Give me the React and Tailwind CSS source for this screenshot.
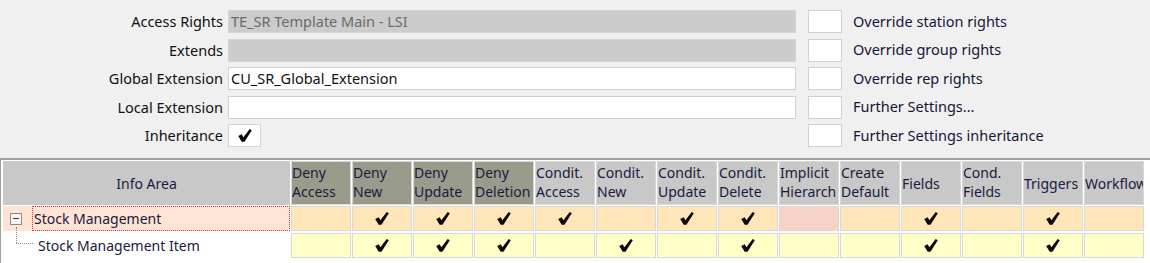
import React from 'react'

const font = { fontFamily: '"Noto Sans", "Liberation Sans", sans-serif' }

function Check() {
  return (
    <svg width="14" height="13" viewBox="0 0 14 13">
      <path d="M0.2 6.9 L3.7 5.3 L5.4 8.3 L11.7 0.1 L13.8 1.3 L6.5 12.8 L3.7 12.8 Z" fill="#0a0a0a" />
    </svg>
  )
}

const fields = [
  { label: 'Access Rights', value: 'TE_SR Template Main - LSI', disabled: true, option: 'Override station rights' },
  { label: 'Extends', value: '', disabled: true, option: 'Override group rights' },
  { label: 'Global Extension', value: 'CU_SR_Global_Extension', option: 'Override rep rights' },
  { label: 'Local Extension', value: '', option: 'Further Settings...' },
  { label: 'Inheritance', check: true, option: 'Further Settings inheritance' },
]

const columns = [
  { title: ['Deny', 'Access'], dark: true },
  { title: ['Deny', 'New'], dark: true },
  { title: ['Deny', 'Update'], dark: true },
  { title: ['Deny', 'Deletion'], dark: true },
  { title: ['Condit.', 'Access'] },
  { title: ['Condit.', 'New'] },
  { title: ['Condit.', 'Update'] },
  { title: ['Condit.', 'Delete'] },
  { title: ['Implicit', 'Hierarch'] },
  { title: ['Create', 'Default'] },
  { title: ['Fields'] },
  { title: ['Cond.', 'Fields'] },
  { title: ['Triggers'] },
  { title: ['Workflow'] },
]

const rows = [
  { name: 'Stock Management', top: true, checks: [0, 1, 1, 1, 1, 0, 1, 1, 0, 0, 1, 0, 1, 0] },
  { name: 'Stock Management Item', checks: [0, 1, 1, 1, 0, 1, 0, 1, 0, 0, 1, 0, 1, 0] },
]

export default function App() {
  return (
    <div className="w-[1150px] h-[263px] overflow-hidden bg-[#f0f0f0] text-[#111]" style={font}>
      {/* form */}
      <div className="h-[158px] pt-[10px] flex flex-col gap-[5.5px]">
        {fields.map((f) => (
          <div key={f.label} className="flex items-center h-[23px]">
            <div className="w-[223px] text-right text-[14.5px] leading-none">{f.label}</div>
            <div className="w-[568px] ml-[5px] h-full">
              {f.check ? (
                <div className="w-[33px] h-full bg-white border border-[#d4d4d4] flex items-center justify-center">
                  <Check />
                </div>
              ) : (
                <div
                  className={`h-full border flex items-center pl-[2px] text-[14.5px] ${
                    f.disabled ? 'bg-[#cccccc] border-[#d6d6d6] text-[#6b6b6b]' : 'bg-white border-[#d0d0d0]'
                  }`}
                >
                  {f.value}
                </div>
              )}
            </div>
            <div className="w-[34px] h-full ml-[12px] bg-white border border-[#d0d0d0]" />
            <div className="ml-[11px] text-[14.5px] text-[#15153a]">{f.option}</div>
          </div>
        ))}
      </div>
      <div className="h-[2px] bg-[#a0a0a0]" />

      {/* grid */}
      <div className="h-[103px] bg-white border-l border-[#a0a0a0] pt-px flex flex-col text-[14px] text-[#1a1a40]">
        <div className="flex h-[44px]">
          <div className="ml-[2px] w-[287px] bg-[#c8c8c8] flex items-center justify-center">Info Area</div>
          <div className="ml-px flex gap-px">
            {columns.map((c) => (
              <div
                key={c.title.join(' ')}
                className={`w-[60px] shrink-0 border border-[#d8d8d8] overflow-hidden whitespace-nowrap leading-[19px] flex flex-col ${
                  c.title.length === 1 ? 'justify-center' : 'justify-start pt-px'
                } ${c.dark ? 'bg-[#9b9b8c]' : 'bg-[#c8c8c8]'}`}
              >
                {c.title.map((t) => (
                  <span key={t}>{t}</span>
                ))}
              </div>
            ))}
          </div>
        </div>

        {rows.map((r, ri) => (
          <div key={r.name} className={`flex h-[25px] ${ri === 0 ? 'mt-px' : 'mt-[2px]'}`}>
            <div className={`ml-[2px] w-[287px] relative flex items-center ${r.top ? 'bg-[#ffe3d4]' : 'bg-white'}`}>
              {r.top ? (
                <>
                  <div className="ml-[7px] w-[12px] h-[12px] border border-[#8a8a8a] bg-[#f4f4f4] flex items-center justify-center">
                    <div className="w-[6px] h-px bg-[#333]" />
                  </div>
                  <div className="ml-[10px] self-stretch flex-1 border border-dotted border-[#e03030] flex items-center pl-px">
                    {r.name}
                  </div>
                </>
              ) : (
                <>
                  <div className="absolute left-[13px] top-[-6px] h-[16px] border-l border-dotted border-[#888]" />
                  <div className="absolute left-[13px] top-[10px] w-[17px] border-t border-dotted border-[#888]" />
                  <div className="ml-[35px]">{r.name}</div>
                </>
              )}
            </div>
            <div className="ml-px flex gap-px">
              {r.checks.map((v, i) => (
                <div
                  key={i}
                  className={`w-[60px] shrink-0 border border-[#d8d8d8] flex items-center justify-center ${
                    r.top ? (i === 8 ? 'bg-[#f6d3c6]' : 'bg-[#ffe5b8]') : 'bg-[#ffffc8]'
                  }`}
                >
                  {v ? <Check /> : null}
                </div>
              ))}
            </div>
          </div>
        ))}
      </div>
    </div>
  )
}
